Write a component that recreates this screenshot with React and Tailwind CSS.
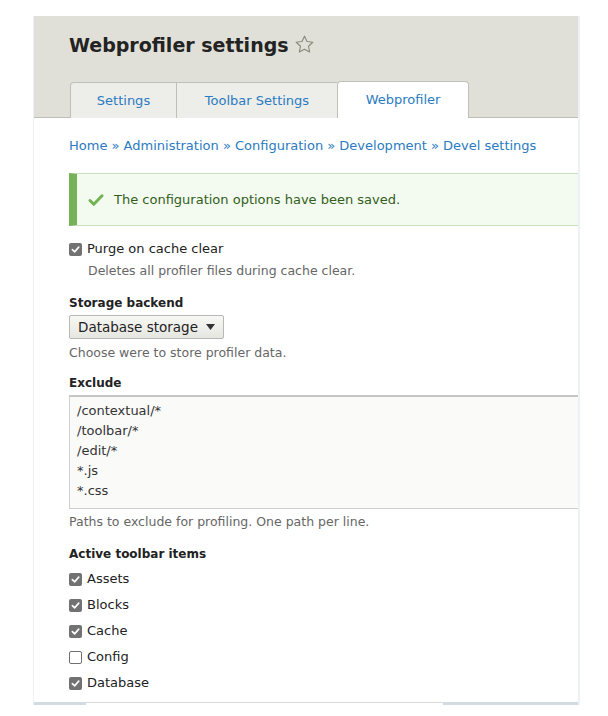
import React from "react";

const font = { fontFamily: '"DejaVu Sans", "Liberation Sans", sans-serif' };

const Box = ({ checked }) =>
  checked ? (
    <span className="w-[13px] h-[13px] rounded-[2px] bg-[#727272] flex items-center justify-center shrink-0">
      <svg width="9" height="9" viewBox="0 0 10 10" fill="none">
        <path d="M1.5 5.2 4 7.6 8.6 2.4" stroke="#fff" strokeWidth="1.8" strokeLinecap="round" strokeLinejoin="round" />
      </svg>
    </span>
  ) : (
    <span className="w-[13px] h-[13px] rounded-[2px] border border-[#6f6f6f] bg-white shrink-0" />
  );

const Check = ({ label, checked = true, className = "" }) => (
  <div className={`flex items-center h-[26px] ${className}`}>
    <Box checked={checked} />
    <span className="ml-[5px] text-[13px] text-[#222]">{label}</span>
  </div>
);

const Desc = ({ children, className = "" }) => (
  <div className={`h-[20px] leading-[20px] text-[12.5px] text-[#666] ${className}`}>{children}</div>
);

const Label = ({ children, className = "" }) => (
  <div className={`h-[20px] leading-[20px] text-[12px] font-bold text-[#222] ${className}`}>{children}</div>
);

export default function App() {
  const crumbs = ["Home", "Administration", "Configuration", "Development", "Devel settings"];
  const excludes = ["/contextual/*", "/toolbar/*", "/edit/*", "*.js", "*.css"];

  return (
    <div className="w-[608px] h-[716px] bg-white pt-[16px] pl-[33px]" style={font}>
      <div className="w-[547px] border-l border-r-2 border-[#edf1f5] flex flex-col">
        {/* header */}
        <div className="bg-[#e0e0d8] h-[102px] flex flex-col">
          <div className="pt-[17px] pl-[35px] flex items-center h-[41px]">
            <h1 className="text-[19px] leading-[24px] font-bold text-[#232323]">Webprofiler settings</h1>
            <svg className="ml-[5px] mt-[-2px]" width="21" height="21" viewBox="0 0 24 24" fill="none">
              <path
                d="M12 2.5l2.9 6.1 6.6.8-4.9 4.6 1.3 6.6L12 17.3l-5.9 3.3 1.3-6.6-4.9-4.6 6.6-.8z"
                stroke="#8a8a7c"
                strokeWidth="1.3"
                strokeLinejoin="round"
              />
            </svg>
          </div>
          <div className="mt-[24px] pl-[36px] flex items-end h-[37px] border-b border-[#bfbfba]">
            <div className="w-[107px] h-[36px] -mb-px flex items-center justify-center bg-[#ededea] border border-b-0 border-[#bfbfba] rounded-tl-[4px] text-[13px] text-[#2a7bc1]">
              Settings
            </div>
            <div className="w-[160px] h-[36px] -mb-px flex items-center justify-center bg-[#ededea] border-t border-[#bfbfba] text-[13px] text-[#2a7bc1]">
              Toolbar Settings
            </div>
            <div className="w-[132px] h-[37px] -mb-px flex items-center justify-center bg-white border border-b-0 border-[#bfbfba] rounded-t-[4px] text-[13px] text-[#2a7bc1]">
              Webprofiler
            </div>
          </div>
        </div>

        {/* content */}
        <div className="pl-[35px] flex flex-col">
          <div className="mt-[18px] h-[20px] leading-[20px] text-[13px] text-[#2a7bc1]">
            {crumbs.map((c, i) => (
              <span key={c}>
                {i > 0 && <span className="text-[#2a7bc1]"> » </span>}
                {c}
              </span>
            ))}
          </div>

          <div className="mt-[17px] h-[53px] flex items-center bg-[#f3faef] border-l-8 border-[#77b259] border-y border-y-[#c9e1bd] pl-[11px]">
            <svg width="16" height="14" viewBox="0 0 16 14" fill="none">
              <path d="M2 7.5l3.8 3.8L14 2.8" stroke="#73b355" strokeWidth="3" strokeLinecap="round" strokeLinejoin="round" />
            </svg>
            <span className="ml-[10px] text-[13px] text-[#325e1c]">The configuration options have been saved.</span>
          </div>

          <Check label="Purge on cache clear" className="mt-[10px]" />
          <Desc className="pl-[19px] -mt-[1px]">Deletes all profiler files during cache clear.</Desc>

          <Label className="mt-[12px]">Storage backend</Label>
          <div className="mt-[2px] w-[155px] h-[24px] flex items-center justify-between px-[8px] border border-[#b8b8b8] rounded-[2px] bg-gradient-to-b from-[#f7f7f4] to-[#e6e6e1] text-[13.5px] text-[#222]">
            <span>Database storage</span>
            <svg width="9" height="6" viewBox="0 0 9 6">
              <path d="M0 0h9L4.5 6z" fill="#333" />
            </svg>
          </div>
          <Desc className="mt-[4px]">Choose were to store profiler data.</Desc>

          <Label className="mt-[10px]">Exclude</Label>
          <div className="mt-[2px] h-[114px] bg-[#fafaf9] border border-[#cfcfcf] border-t-2 border-t-[#c6c6c6] border-r-0 pt-[4px] pl-[7px] flex flex-col">
            {excludes.map((e) => (
              <div key={e} className="h-[20px] leading-[20px] text-[13px] text-[#333]">{e}</div>
            ))}
          </div>
          <Desc className="mt-[3px]">Paths to exclude for profiling. One path per line.</Desc>

          <Label className="mt-[12px]">Active toolbar items</Label>
          <div className="mt-[2px] flex flex-col">
            <Check label="Assets" />
            <Check label="Blocks" />
            <Check label="Cache" />
            <Check label="Config" checked={false} />
            <Check label="Database" />
          </div>
        </div>

        <div className="h-[6px]" />
        <div className="flex h-[3px]">
          <div className="w-[52px] bg-[#d3dbe2]" />
          <div className="flex-1 border-t border-[#d8d8d8]" />
          <div className="w-[135px] bg-[#d3dbe2]" />
        </div>
      </div>
    </div>
  );
}
